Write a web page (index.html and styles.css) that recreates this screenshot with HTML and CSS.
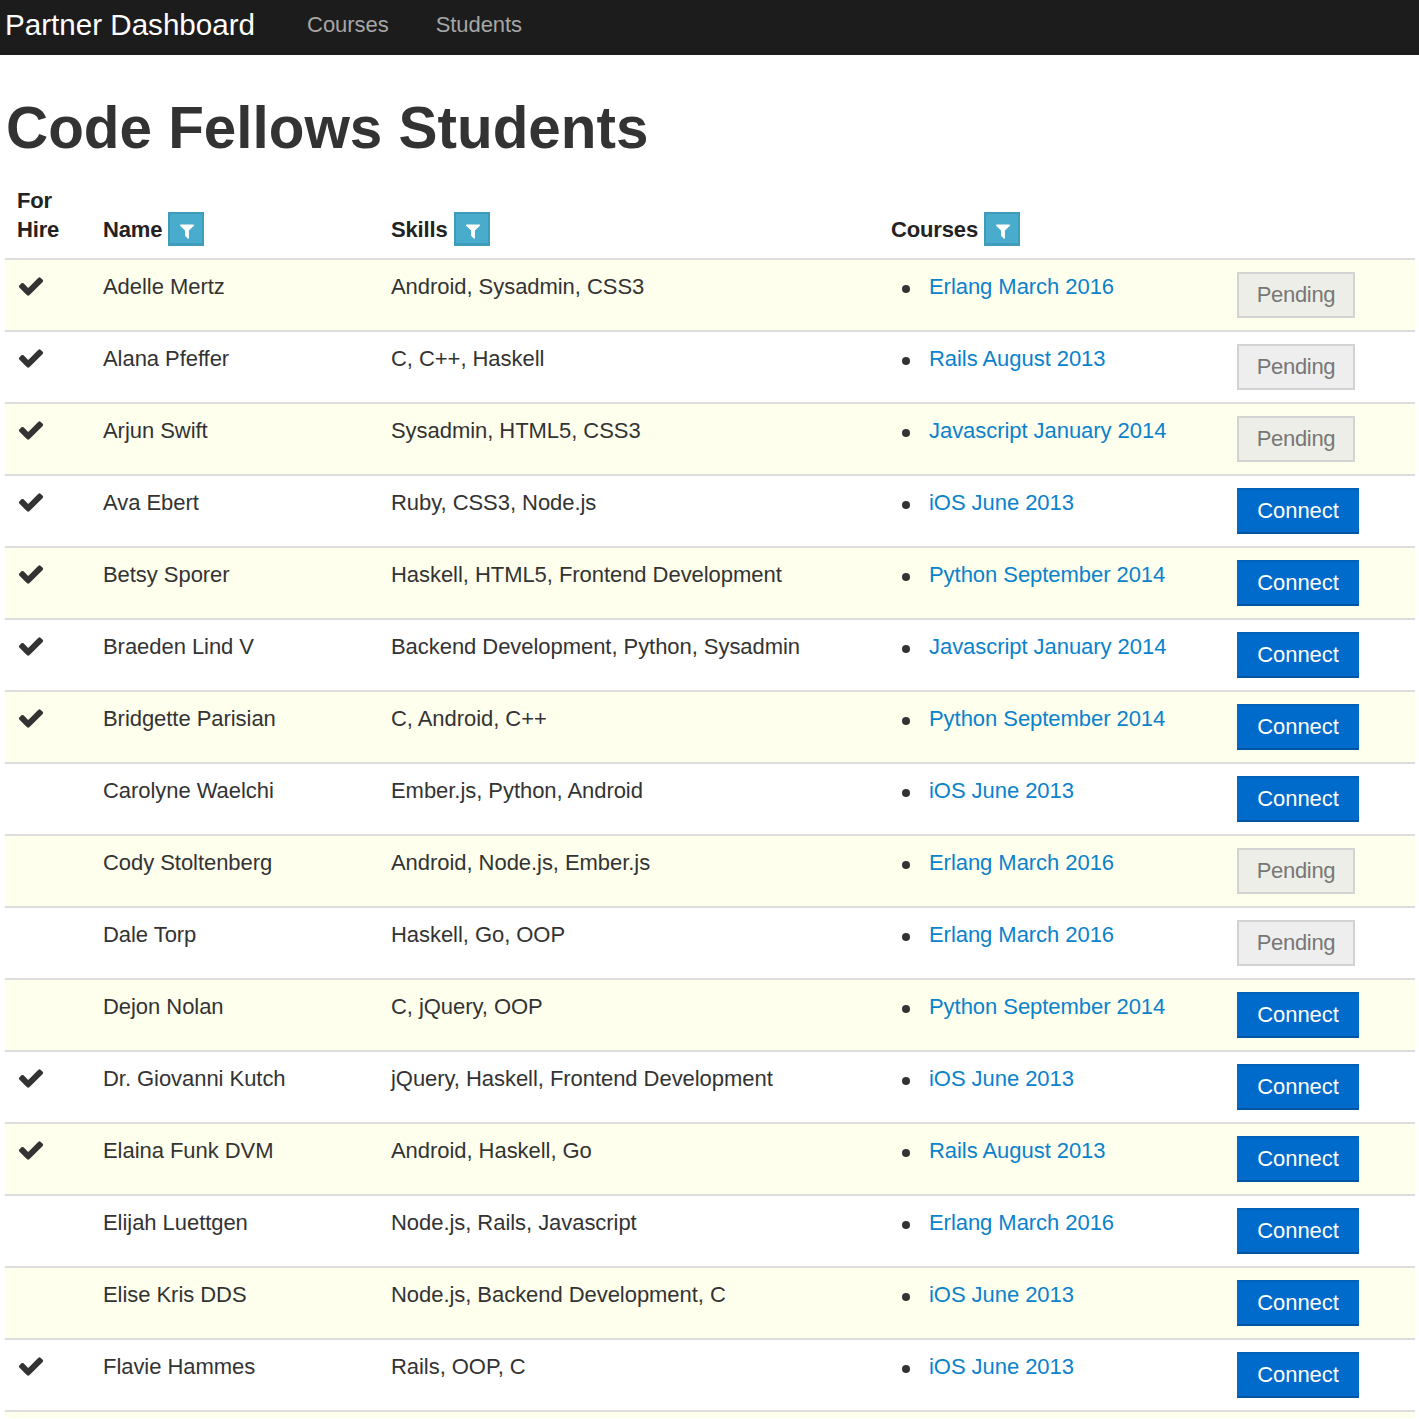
FILE: index.html
```html
<!DOCTYPE html>
<html lang="en">
<head>
    <meta charset="UTF-8">
    <title>Partner Dashboard</title>
    <link rel="stylesheet" href="styles.css">
</head>
<body>
    <svg class="icon-defs" width="0" height="0" aria-hidden="true">
        <symbol id="icon-check" viewBox="0 0 1792 1792"><path d="M1671 566q0 40-28 68l-724 724-136 136q-28 28-68 28t-68-28l-136-136-362-362q-28-28-28-68t28-68l136-136q28-28 68-28t68 28l294 295 656-657q28-28 68-28t68 28l136 136q28 28 28 68z"/></symbol>
        <symbol id="icon-filter" viewBox="0 0 1792 1792"><path d="M1595 295q17 41-14 70l-493 493v742q0 42-39 59-13 5-25 5-27 0-45-19l-256-256q-19-19-19-45v-486l-493-493q-31-29-14-70 17-39 59-39h1280q42 0 59 39z"/></symbol>
    </svg>

    <nav class="top-bar">
        <a class="brand" href="#">Partner Dashboard</a>
        <a class="nav-link" href="#">Courses</a>
        <a class="nav-link" href="#">Students</a>
    </nav>

    <h1>Code Fellows Students</h1>

    <table class="students">
        <colgroup>
            <col class="col-hire">
            <col class="col-name">
            <col class="col-skills">
            <col class="col-courses">
            <col class="col-action">
        </colgroup>
        <thead>
            <tr>
                <th>For<br>Hire</th>
                <th>Name <button class="filter" aria-label="Filter by name"><svg><use href="#icon-filter"/></svg></button></th>
                <th>Skills <button class="filter" aria-label="Filter by skills"><svg><use href="#icon-filter"/></svg></button></th>
                <th>Courses <button class="filter" aria-label="Filter by courses"><svg><use href="#icon-filter"/></svg></button></th>
                <th></th>
            </tr>
        </thead>
        <tbody>
            <tr>
                <td><svg class="check"><use href="#icon-check"/></svg></td>
                <td>Adelle Mertz</td>
                <td>Android, Sysadmin, CSS3</td>
                <td><ul><li><a href="#">Erlang March 2016</a></li></ul></td>
                <td><a class="btn pending" href="#">Pending</a></td>
            </tr>
            <tr>
                <td><svg class="check"><use href="#icon-check"/></svg></td>
                <td>Alana Pfeffer</td>
                <td>C, C++, Haskell</td>
                <td><ul><li><a href="#">Rails August 2013</a></li></ul></td>
                <td><a class="btn pending" href="#">Pending</a></td>
            </tr>
            <tr>
                <td><svg class="check"><use href="#icon-check"/></svg></td>
                <td>Arjun Swift</td>
                <td>Sysadmin, HTML5, CSS3</td>
                <td><ul><li><a href="#">Javascript January 2014</a></li></ul></td>
                <td><a class="btn pending" href="#">Pending</a></td>
            </tr>
            <tr>
                <td><svg class="check"><use href="#icon-check"/></svg></td>
                <td>Ava Ebert</td>
                <td>Ruby, CSS3, Node.js</td>
                <td><ul><li><a href="#">iOS June 2013</a></li></ul></td>
                <td><a class="btn connect" href="#">Connect</a></td>
            </tr>
            <tr>
                <td><svg class="check"><use href="#icon-check"/></svg></td>
                <td>Betsy Sporer</td>
                <td>Haskell, HTML5, Frontend Development</td>
                <td><ul><li><a href="#">Python September 2014</a></li></ul></td>
                <td><a class="btn connect" href="#">Connect</a></td>
            </tr>
            <tr>
                <td><svg class="check"><use href="#icon-check"/></svg></td>
                <td>Braeden Lind V</td>
                <td>Backend Development, Python, Sysadmin</td>
                <td><ul><li><a href="#">Javascript January 2014</a></li></ul></td>
                <td><a class="btn connect" href="#">Connect</a></td>
            </tr>
            <tr>
                <td><svg class="check"><use href="#icon-check"/></svg></td>
                <td>Bridgette Parisian</td>
                <td>C, Android, C++</td>
                <td><ul><li><a href="#">Python September 2014</a></li></ul></td>
                <td><a class="btn connect" href="#">Connect</a></td>
            </tr>
            <tr>
                <td></td>
                <td>Carolyne Waelchi</td>
                <td>Ember.js, Python, Android</td>
                <td><ul><li><a href="#">iOS June 2013</a></li></ul></td>
                <td><a class="btn connect" href="#">Connect</a></td>
            </tr>
            <tr>
                <td></td>
                <td>Cody Stoltenberg</td>
                <td>Android, Node.js, Ember.js</td>
                <td><ul><li><a href="#">Erlang March 2016</a></li></ul></td>
                <td><a class="btn pending" href="#">Pending</a></td>
            </tr>
            <tr>
                <td></td>
                <td>Dale Torp</td>
                <td>Haskell, Go, OOP</td>
                <td><ul><li><a href="#">Erlang March 2016</a></li></ul></td>
                <td><a class="btn pending" href="#">Pending</a></td>
            </tr>
            <tr>
                <td></td>
                <td>Dejon Nolan</td>
                <td>C, jQuery, OOP</td>
                <td><ul><li><a href="#">Python September 2014</a></li></ul></td>
                <td><a class="btn connect" href="#">Connect</a></td>
            </tr>
            <tr>
                <td><svg class="check"><use href="#icon-check"/></svg></td>
                <td>Dr. Giovanni Kutch</td>
                <td>jQuery, Haskell, Frontend Development</td>
                <td><ul><li><a href="#">iOS June 2013</a></li></ul></td>
                <td><a class="btn connect" href="#">Connect</a></td>
            </tr>
            <tr>
                <td><svg class="check"><use href="#icon-check"/></svg></td>
                <td>Elaina Funk DVM</td>
                <td>Android, Haskell, Go</td>
                <td><ul><li><a href="#">Rails August 2013</a></li></ul></td>
                <td><a class="btn connect" href="#">Connect</a></td>
            </tr>
            <tr>
                <td></td>
                <td>Elijah Luettgen</td>
                <td>Node.js, Rails, Javascript</td>
                <td><ul><li><a href="#">Erlang March 2016</a></li></ul></td>
                <td><a class="btn connect" href="#">Connect</a></td>
            </tr>
            <tr>
                <td></td>
                <td>Elise Kris DDS</td>
                <td>Node.js, Backend Development, C</td>
                <td><ul><li><a href="#">iOS June 2013</a></li></ul></td>
                <td><a class="btn connect" href="#">Connect</a></td>
            </tr>
            <tr>
                <td><svg class="check"><use href="#icon-check"/></svg></td>
                <td>Flavie Hammes</td>
                <td>Rails, OOP, C</td>
                <td><ul><li><a href="#">iOS June 2013</a></li></ul></td>
                <td><a class="btn connect" href="#">Connect</a></td>
            </tr>
            <tr class="cut-row">
                <td colspan="5"></td>
            </tr>
        </tbody>
    </table>
</body>
</html>
```

FILE: styles.css
```css
html, body {
    margin: 0;
    padding: 0;
}

body {
    font-family: "Liberation Sans", Arial, sans-serif;
    font-size: 22px;
    letter-spacing: -0.05px;
    color: #333;
    background-color: #fff;
}

.icon-defs {
    display: block;
    height: 0;
}

/* Top navigation */
.top-bar {
    display: flex;
    align-items: center;
    box-sizing: border-box;
    height: 55px;
    padding: 0 0 5px 5px;
    background-color: #1c1c1c;
}

.brand {
    margin-right: 52px;
    font-size: 29.6px;
    letter-spacing: 0;
    color: #fff;
    text-decoration: none;
}

.nav-link {
    margin-right: 47px;
    font-size: 22px;
    color: #a6a6a6;
    text-decoration: none;
}

h1 {
    margin: 0;
    padding: 37px 0 23px 6px;
    font-size: 58.4px;
    line-height: 71px;
    font-weight: bold;
    letter-spacing: 0;
    color: #333;
}

/* Students table */
.students {
    width: 1410px;
    margin-left: 5px;
    border-collapse: collapse;
    table-layout: fixed;
}

.col-hire { width: 86px; }
.col-name { width: 288px; }
.col-skills { width: 500px; }
.col-courses { width: 346px; }
.col-action { width: 190px; }

.students th {
    padding: 0 12px 14px;
    line-height: 29px;
    letter-spacing: -0.15px;
    text-align: left;
    vertical-align: bottom;
    color: #222;
    border-bottom: 2px solid #ddd;
}

.students td {
    height: 70px;
    padding: 12px 12px 0;
    box-sizing: border-box;
    line-height: 30px;
    vertical-align: top;
    border-bottom: 2px solid #ddd;
}

.students tbody tr {
    height: 72px;
}

.students tbody tr:nth-child(odd) {
    background-color: #ffffee;
}

.students .cut-row {
    height: 7px;
}

.students .cut-row td {
    height: 7px;
    padding: 0;
    border-bottom: 0;
}

.check {
    display: block;
    width: 28px;
    height: 28px;
    fill: #333;
}

.filter {
    display: inline-block;
    width: 36px;
    height: 34px;
    margin: -3px 0 -2px;
    padding: 0;
    vertical-align: bottom;
    background-color: #4aaccd;
    border: 2px solid #3f9bba;
    border-bottom-width: 3px;
    cursor: pointer;
}

.filter svg {
    display: block;
    width: 18px;
    height: 18px;
    margin: 4px 6px 0 8px;
    fill: #fff;
}

ul {
    margin: 0;
    padding-left: 11px;
    list-style: none;
}

li {
    display: flex;
    gap: 19px;
}

li::before {
    content: "";
    flex: none;
    width: 8px;
    height: 8px;
    margin-top: 13px;
    border-radius: 50%;
    background-color: #333;
}

li a {
    color: #0a82cc;
    text-decoration: none;
}

.btn {
    display: inline-block;
    box-sizing: border-box;
    height: 46px;
    line-height: 41px;
    text-align: center;
    text-decoration: none;
}

.pending {
    width: 118px;
    letter-spacing: -0.3px;
    color: #777;
    background-color: rgba(229, 229, 229, 0.65);
    border: 2px solid #d3d3d3;
}

.connect {
    width: 122px;
    color: #fff;
    background-color: #006bcb;
    border-top: 2px solid #0062ba;
    border-bottom: 2px solid #0056a3;
}
```
